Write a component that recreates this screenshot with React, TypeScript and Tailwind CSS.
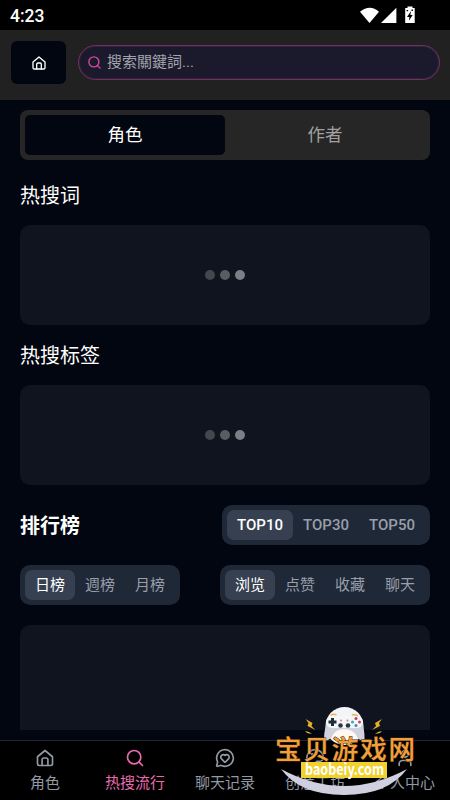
import React from "react";
import { House, Search, MessageCircleHeart, Palette, User } from "lucide-react";

function HomeIcon({ size, className = "" }: { size: number; className?: string }) {
  return (
    <svg width={size} height={size} viewBox="0 0 24 24" fill="none" stroke="currentColor" strokeWidth="2" strokeLinecap="round" strokeLinejoin="round" className={className}>
      <path d="M3 10.5 12 3l9 7.5V19a2 2 0 0 1-2 2H5a2 2 0 0 1-2-2z" />
      <path d="M8.5 21v-7a2 2 0 0 1 2-2h3a2 2 0 0 1 2 2v7" />
    </svg>
  );
}

function StatusBar() {
  return (
    <div className="flex h-[30px] items-center justify-between bg-black pl-[10px] pr-[34px] text-white">
      <span className="font-[Roboto] text-[17.5px] leading-[30px] font-medium pt-[2px]">4:23</span>
      <svg width="56" height="18" viewBox="0 0 56 18" fill="white">
        <path d="M0 5.8Q10 -2.5 19 5.8L9.5 17Z" />
        <path d="M21 17 36.4 1.8V17Z" />
        <path d="M45.2 2h2.3V.4h5V2h2.2v15h-9.5z" />
        <path d="m51 5-4 6h2.4l-.5 3.7 3.8-5.7h-2.3z" fill="black" />
        <path d="M46.6 4h1.5v1.2h-1.5zm4.9-.4H53v1.3h-1.5z" fill="black" />
      </svg>
    </div>
  );
}

function Segments({ items, itemClass, className = "" }: { items: string[]; itemClass: string; className?: string }) {
  return (
    <div className={"flex h-10 items-center rounded-[10px] bg-[#1f2836] p-[5px] text-[15px] " + className}>
      {items.map((t, i) => (
        <div
          key={t}
          className={
            "flex h-[30px] items-center justify-center rounded-[7px] " + itemClass + (i === 0 ? " bg-[#374050] text-white" : " text-[#989fab]")
          }
        >
          {t}
        </div>
      ))}
    </div>
  );
}

function LoadingCard() {
  return (
    <div className="flex h-[100px] items-center justify-center gap-[5px] rounded-[10px] bg-[#10141e]">
      <i className="size-[10px] rounded-full bg-[#45474f]" />
      <i className="size-[10px] rounded-full bg-[#5a5c64]" />
      <i className="size-[10px] rounded-full bg-[#7c7e85]" />
    </div>
  );
}

function Watermark() {
  return (
    <svg className="absolute top-[700px] left-[270px]" width="150" height="100" viewBox="270 700 150 100">
      <path d="M281 769Q344 803 407 769Q388 795 344 795Q300 795 281 769Z" fill="#cfcfdf" />
      <circle cx="344.5" cy="726" r="19" fill="#f4f5f8" />
      <path d="M329 718Q344 715 360 718Q365 727 364.500 740Q359 742 356 735Q352 729 344.500 729Q336 729 333 735Q329 742 324 740Q324 727 329 718Z" fill="#cfd1df" />
      <rect x="326" y="716" width="37" height="12" rx="6" fill="#f6f6f8" />
      <path d="M330.500 715.500q3-2 6-.5M352 715q3-1 6 1" stroke="#e6b557" strokeWidth="1.500" fill="none" />
      <path d="M332.500 718v8M328.500 722h8" stroke="#222b3a" strokeWidth="3" />
      <circle cx="356" cy="718.500" r="1.500" fill="#b6475b" />
      <circle cx="352.500" cy="722" r="1.500" fill="#3ea6bb" />
      <circle cx="359.500" cy="722" r="1.500" fill="#ce4656" />
      <circle cx="356" cy="725.500" r="1.500" fill="#398cae" />
      <circle cx="340.500" cy="725.500" r="2.300" fill="#283745" />
      <circle cx="348" cy="725.500" r="2.300" fill="#283745" />
      <circle cx="341" cy="720.500" r="1" fill="#d17782" />
      <circle cx="347.500" cy="720.500" r="1" fill="#d17782" />
      <ellipse cx="344.500" cy="737" rx="12" ry="7" fill="#fff9f0" />
      <path d="m305.500 719 7 4-1 3 4 4-8-4 1-3zM305 731l4 1 3 2-5-1zM382 719l-7 4 1 3-4 4 8-4-1-3zM382 731l-4 1-3 2 5-1z" fill="#e6b12a" />
      <text x="275" y="758.500" fontSize="26.500" letterSpacing="1.900" fontWeight="500" fontFamily="'Noto Sans CJK SC', sans-serif" fill="#f0a03a" stroke="#4a2810" strokeWidth="1" paintOrder="stroke">宝贝游戏网</text>
      <rect x="301" y="762" width="86" height="16" fill="#f1d12e" />
      <text x="305" y="774.500" fontSize="16" textLength="79" lengthAdjust="spacingAndGlyphs" fontWeight="600" fontFamily="'Noto Sans CJK SC', sans-serif" fill="white">baobeiy.com</text>
    </svg>
  );
}

const navItem = "flex w-[90px] flex-col items-center pt-[7px]";

export default function App() {
  return (
    <div className="relative flex h-[800px] w-[450px] flex-col overflow-hidden bg-[#020610] font-[Roboto,'Noto_Sans_CJK_SC',sans-serif] text-white">
      <StatusBar />
      <header className="flex h-[70px] items-center bg-[#212121] pr-[10px] pb-[5px] pl-[11px]">
        <button className="mr-3 flex h-[43px] w-[55px] items-center justify-center rounded-[6px] bg-[#020611]">
          <HomeIcon size={16} />
        </button>
        <div className="flex h-[35px] flex-1 items-center rounded-full border border-[#71325f] bg-[#1a1a2c] pl-2 ring-1 ring-[#71325f]/30 ring-inset">
          <Search size={15} strokeWidth={2.2} className="text-[#d5479b]" />
          <span className="ml-[5px] text-[15px] text-[#a3a3ad] font-[Roboto,'Noto_Sans_CJK_TC',sans-serif]">搜索關鍵詞...</span>
        </div>
      </header>

      <main className="h-[630px] overflow-hidden px-5 pt-[10px]">
        <div className="flex h-[50px] rounded-[8px] bg-[#262626] p-[5px] text-[17.5px]">
          <div className="flex flex-1 items-center justify-center rounded-[5px] bg-[#020610]">角色</div>
          <div className="flex flex-1 items-center justify-center text-[#a1a1a1]">作者</div>
        </div>
        <h2 className="mt-[21px] mb-[14px] text-[20px] leading-[30px]">热搜词</h2>
        <LoadingCard />
        <h2 className="mt-4 mb-[14px] text-[20px] leading-[30px]">热搜标签</h2>
        <LoadingCard />
        <div className="mt-5 flex items-center justify-between">
          <h2 className="pt-[2px] text-[20px] font-bold">排行榜</h2>
          <Segments items={["TOP10", "TOP30", "TOP50"]} itemClass="w-[66px]" className="font-medium" />
        </div>
        <div className="mt-5 flex items-center justify-between">
          <Segments items={["日榜", "週榜", "月榜"]} itemClass="w-[50px] pt-px" />
          <Segments items={["浏览", "点赞", "收藏", "聊天"]} itemClass="w-[50px] pt-px" />
        </div>
        <div className="mt-5 h-[125px] rounded-[10px] bg-[#10141e]" />
      </main>

      <nav className="mt-[10px] flex h-[60px] border-t border-[#1d2534] bg-black text-[15px] leading-[22px] text-[#9299a5]">
        <div className={navItem}>
          <HomeIcon size={20} />
          <span className="mt-[4px]">角色</span>
        </div>
        <div className={navItem + " text-[#e86bb0]"}>
          <Search size={20} />
          <span className="mt-[4px]">热搜流行</span>
        </div>
        <div className={navItem}>
          <MessageCircleHeart size={20} />
          <span className="mt-[4px]">聊天记录</span>
        </div>
        <div className={navItem}>
          <Palette size={20} />
          <span className="mt-[4px]">创意工坊</span>
        </div>
        <div className={navItem}>
          <User size={20} />
          <span className="mt-[4px]">个人中心</span>
        </div>
      </nav>
      <Watermark />
    </div>
  );
}
